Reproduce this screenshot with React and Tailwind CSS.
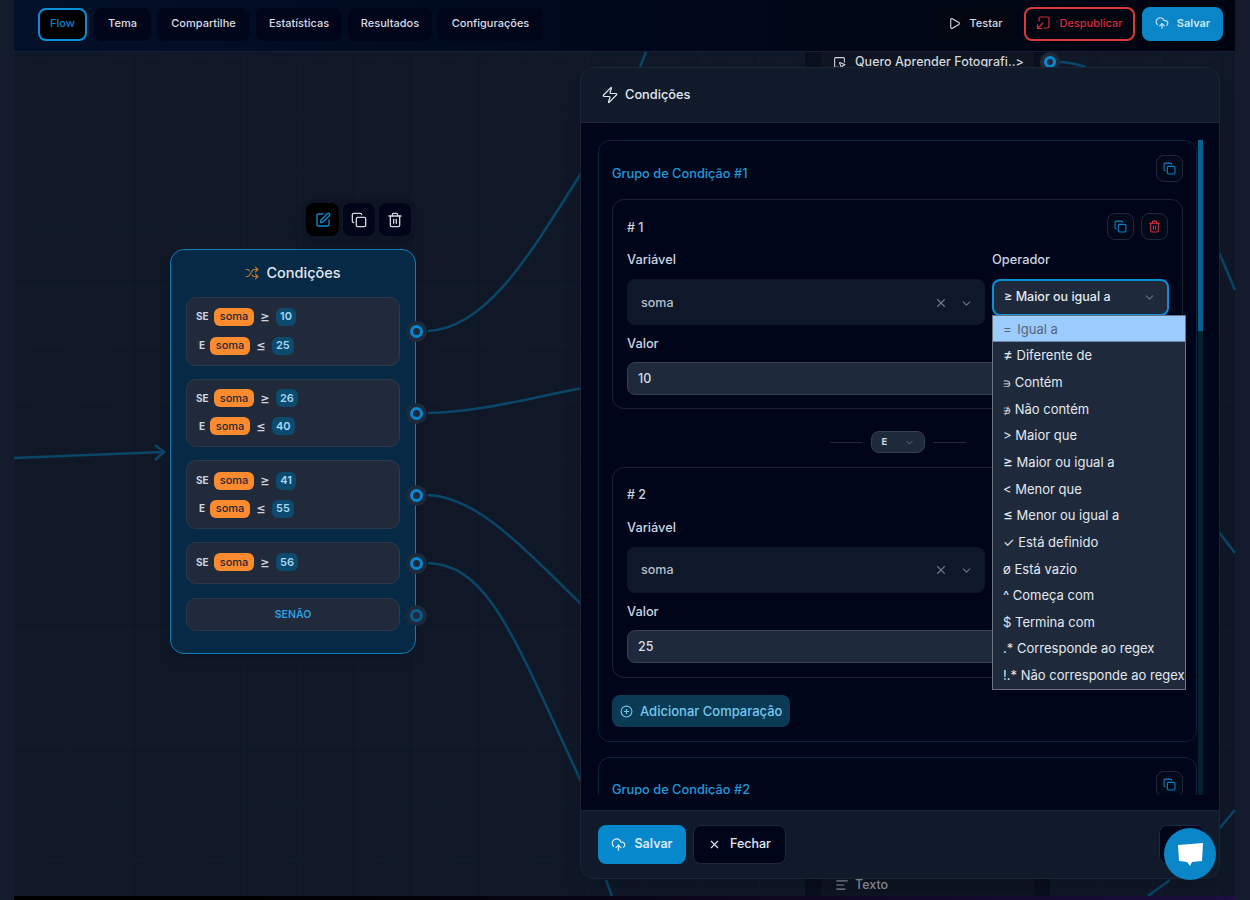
import React from 'react'
import { ChevronDown, CirclePlus, CloudUpload, Copy, AlignLeft, Play, Shuffle, SquareMousePointer, SquarePen, Trash2, X, Zap } from 'lucide-react'

const tabs = [
    { label: 'Tema', w: 'w-[57px]' },
    { label: 'Compartilhe', w: 'w-[93px]' },
    { label: 'Estatísticas', w: 'w-[86px]' },
    { label: 'Resultados', w: 'w-[84px]' },
    { label: 'Configurações', w: 'w-[105px]' },
]

const symBig = 'text-[15px] leading-none'
const symSmall = 'text-[9px] leading-none'

const operators = [
    ['≠', 'Diferente de', symBig],
    ['∋', 'Contém', symSmall],
    ['∌', 'Não contém', symSmall],
    ['>', 'Maior que', ''],
    ['≥', 'Maior ou igual a', symBig],
    ['<', 'Menor que', ''],
    ['≤', 'Menor ou igual a', symBig],
    ['✓', 'Está definido', ''],
    ['ø', 'Está vazio', ''],
    ['^', 'Começa com', ''],
    ['$', 'Termina com', ''],
    ['.*', 'Corresponde ao regex', ''],
    ['!.*', 'Não corresponde ao regex', ''],
]

const nodeGroups = [
    { cls: 'h-[69px] gap-[11px] pb-[1px]', rows: [['SE', '≥', '10'], ['E', '≤', '25']] },
    { cls: 'h-[68px] gap-[10px] pb-[2px]', rows: [['SE', '≥', '26'], ['E', '≤', '40']] },
    { cls: 'h-[69px] gap-[10px]', rows: [['SE', '≥', '41'], ['E', '≤', '55']] },
    { cls: 'h-[42px] pb-[2px]', rows: [['SE', '≥', '56']] },
]

const handles = [331, 413, 495, 563]

const edges = [
    'M428 331 C 490 328, 535 245, 582 172',
    'M428 413 C 480 412, 530 398, 582 388',
    'M428 495 C 480 497, 530 555, 582 605',
    'M428 563 C 490 565, 515 640, 585 790',
    'M14 458 L 163 452',
    'M155 445 L 164 452 L 155 460',
    'M1218 250 L 1235 290',
    'M1218 531 L 1235 553',
    'M1235 810 L 1218 830',
    'M1170 880 L 1148 896',
    'M606 880 L 612 896',
    'M640 67 L 646 52',
    'M1058 62 C 1068 62, 1076 64, 1086 67',
]

const Handle = ({ y, dim }) => (
    <div className="absolute left-[406px] w-[21px] h-[21px] rounded-full bg-[#1e293b] flex items-center justify-center" style={{ top: y - 10 }}>
        <div className={`w-[13px] h-[13px] rounded-full border-[3px] bg-[#1e293b] ${dim ? 'border-[#0b5d8c]' : 'border-[#0788d0]'}`} />
    </div>
)

const NodeRow = ({ row }) => {
    const isSe = row[0] === 'SE'
    return (
        <div className={`flex items-center h-[18px] ${isSe ? 'pl-[9px]' : 'pl-[12px]'}`}>
            <span className={`text-[10px] font-bold text-[#cbd5e1] ${isSe ? 'w-[18px]' : 'w-[11px]'}`}>{row[0]}</span>
            <span className="h-[18px] w-[40px] rounded-[6px] bg-[#fb8b2e] text-[#1f2937] text-[11px] font-medium flex items-center justify-center">soma</span>
            <span className="w-[22px] text-center text-[#cbd5e1] text-[15px] leading-none">{row[1]}</span>
            <span className="h-[18px] px-[4px] min-w-[20px] rounded-[6px] bg-[#0c4a6e] text-[#a5d8f5] text-[11px] font-semibold flex items-center justify-center">{row[2]}</span>
        </div>
    )
}

const ConditionNode = () => (
    <div className="absolute left-[170px] top-[249px] w-[246px] h-[405px] rounded-[14px] border border-[#0f7cb8] bg-[#062a45] px-[15px] shadow-lg">
        <div className="h-[46px] mb-[1px] flex items-center justify-center gap-[7px] text-[14.5px] text-[#e2e8f0] font-medium">
            <Shuffle size={14} className="text-[#c8762f]" />
            Condições
        </div>
        <div className="flex flex-col gap-[13px]">
            {nodeGroups.map((g, i) => (
                <div key={i} className={`${g.cls} rounded-[10px] border border-[#2c394c] bg-[#202a3b] flex flex-col justify-center`}>
                    {g.rows.map((r) => <NodeRow key={r[2]} row={r} />)}
                </div>
            ))}
            <div className="h-[33px] mt-[1px] rounded-[10px] border border-[#2c394c] bg-[#202a3b] flex items-center justify-center text-[10.5px] font-semibold text-[#2f9fe0]">SENÃO</div>
        </div>
    </div>
)

const NodeToolbar = () => (
    <div className="absolute left-[302px] top-[199px] w-[114px] h-[41px] rounded-[10px] bg-[#0d1423] shadow-lg flex items-center pl-[4px] gap-[4px]">
        <button className="w-[33px] h-[33px] rounded-[8px] bg-black text-[#0a8fd6] flex items-center justify-center"><SquarePen size={16} /></button>
        <button className="w-[32px] h-[33px] rounded-[8px] bg-[#01051a] text-[#d1d5db] flex items-center justify-center"><Copy size={16} /></button>
        <button className="w-[32px] h-[33px] rounded-[8px] bg-[#01051a] text-[#d1d5db] flex items-center justify-center"><Trash2 size={16} /></button>
    </div>
)

const IconBtn = ({ red, children }) => (
    <button className={`w-[27px] h-[27px] rounded-[8px] border border-[#1e293b] bg-[#030919] flex items-center justify-center ${red ? 'text-[#dc2f3c]' : 'text-[#0a85c7]'}`}>
        {children}
    </button>
)

const OperatorDropdown = () => (
    <div className="absolute z-20 left-0 top-[36px] w-[194px] h-[375px] border border-[#6b7280] bg-[#1e293b] text-[13px] leading-[26.65px] text-[#e2e8f0]">
        <div className="h-[26.4px] bg-[#9ccbff] text-[#55657c] pl-[10px] border-b border-[#6f89a8]">= <span className="ml-[2px]">Igual a</span></div>
        {operators.map(([sym, text, cls]) => (
            <div key={text} className="h-[26.65px] pl-[10px] whitespace-nowrap overflow-hidden">
                <span className={cls}>{sym}</span> {text}
            </div>
        ))}
    </div>
)

// o segundo card fica coberto pelo dropdown, entao a coluna do operador vai vazia
const Comparison = ({ n, value, first }) => (
    <div className={`w-[571px] rounded-[12px] border border-[#1a2433] px-[14px] pt-[13px] ${first ? 'h-[210px]' : 'h-[211px]'}`}>
        <div className="flex items-center justify-between h-[27px]">
            <span className={`${first ? 'pt-[3px]' : 'pt-[1px]'} text-[12.5px] font-medium text-[#cbd5e1]`}>{`# ${n}`}</span>
            <div className="flex gap-[7px]">
                <IconBtn><Copy size={13} /></IconBtn>
                <IconBtn red><Trash2 size={13} /></IconBtn>
            </div>
        </div>
        <div className="flex gap-[7px] mt-[10px]">
            <div className="w-[358px] shrink-0">
                <div className="h-[18px] leading-[20px] text-[12.8px] text-[#cbd5e1] font-medium">Variável</div>
                <div className={`mt-[11px] h-[46px] rounded-[8px] bg-[#0f172a] flex items-center justify-between ${first ? 'pt-[2px]' : ''} pl-[14px] pr-[12px] text-[12.5px] font-medium text-[#b6c0cc]`}>
                    soma
                    <span className="flex items-center gap-[12px] text-[#6b7685]">
                        <X size={14} />
                        <ChevronDown size={13} />
                    </span>
                </div>
            </div>
            {first && (
                <div>
                    <div className="h-[18px] leading-[20px] text-[12.8px] text-[#cbd5e1] font-medium">Operador</div>
                    <div className="relative mt-[11px] w-[177px]">
                        <div className="h-[37px] rounded-[8px] bg-[#1e293b] border-2 border-[#0a8fd6] flex items-center justify-between pl-[10px] pr-[11px] text-[12.5px] font-medium text-[#e2e8f0]">
                            ≥ Maior ou igual a
                            <ChevronDown size={13} className="text-[#64748b]" />
                        </div>
                        <OperatorDropdown />
                    </div>
                </div>
            )}
        </div>
        <div className="h-[18px] leading-[20px] mt-[9px] text-[12.8px] text-[#cbd5e1] font-medium">Valor</div>
        <div className="mt-[10px] h-[33px] w-[541px] rounded-[8px] bg-[#1e293b] border border-[#334155] flex items-center pt-[2px] pl-[10px] text-[12.5px] font-medium text-[#d5dbe3]">{value}</div>
    </div>
)

const Connector = () => (
    <div className="h-[22px] mt-[22px] mb-[14px] w-[571px] flex items-center justify-center gap-[8px]">
        <div className="w-[33px] h-px bg-[#1e293b]" />
        <div className="w-[54px] h-[22px] rounded-[8px] border border-[#334155] bg-[#1e293b] flex items-center justify-between pl-[10px] pr-[9px] text-[9.5px] font-bold text-[#cbd5e1]">
            E
            <ChevronDown size={11} className="text-[#64748b]" />
        </div>
        <div className="w-[33px] h-px bg-[#1e293b]" />
    </div>
)

const ConditionsModal = () => (
    <div className="absolute z-10 left-[580px] top-[67px] w-[640px] h-[812px] rounded-[14px] border border-[#1b2536] bg-[#111a2b] overflow-hidden flex flex-col shadow-xl">
        <div className="h-[55px] shrink-0 border-b border-[#1b2536] flex items-center gap-[6px] pl-[20px] text-[12.8px] font-medium text-[#e2e8f0]">
            <Zap size={18} strokeWidth={1.6} />
            Condições
        </div>
        <div className="relative flex-1 bg-[#01051a] pt-[17px] pl-[17px]">
            <div className="h-[655px] overflow-hidden">
                <div className="w-[599px] h-[602px] rounded-[12px] border border-[#0b2338] px-[13px] pt-[14px]">
                    <div className="flex items-start justify-between h-[27px] mb-[17px]">
                        <span className="mt-[9px] text-[12.8px] font-medium text-[#1f9ad8]">Grupo de Condição #1</span>
                        <IconBtn><Copy size={13} /></IconBtn>
                    </div>
                    <Comparison n={1} value="10" first />
                    <Connector />
                    <Comparison n={2} value="25" />
                    <button className="mt-[17px] w-[178px] h-[32px] rounded-[8px] bg-[#0b3a55] flex items-center gap-[7px] pt-[1px] pl-[8px] text-[13px] font-medium text-[#74c7ee]">
                        <CirclePlus size={13} />
                        Adicionar Comparação
                    </button>
                </div>
                <div className="mt-[15px] w-[599px] h-[200px] rounded-[12px] border border-[#0b2338] px-[13px] pt-[13px]">
                    <div className="flex items-start justify-between h-[27px]">
                        <span className="mt-[9px] text-[12.8px] font-medium text-[#1f9ad8]">Grupo de Condição #2</span>
                        <IconBtn><Copy size={13} /></IconBtn>
                    </div>
                </div>
            </div>
            <div className="absolute left-[617px] top-[17px] w-[5px] h-[655px] bg-[#04202f]">
                <div className="w-[5px] h-[191px] bg-[#07608f]" />
            </div>
        </div>
        <div className="h-[68px] shrink-0 border-t border-[#1b2536] flex items-center pl-[17px] pr-[14px] gap-[7px]">
            <button className="w-[88px] h-[39px] rounded-[8px] bg-[#0788cc] flex items-center justify-center gap-[8px] text-[12.5px] font-semibold text-[#dbeafe]">
                <CloudUpload size={15} />
                Salvar
            </button>
            <button className="w-[93px] h-[39px] rounded-[8px] border border-[#1e293b] bg-[#01051a] flex items-center justify-center gap-[9px] text-[12.5px] font-medium text-[#e2e8f0]">
                <X size={13} />
                Fechar
            </button>
            <button className="ml-auto w-[46px] h-[39px] rounded-[8px] border border-[#1e293b] bg-[#01051a]" />
        </div>
    </div>
)

const TopBar = () => (
    <div className="relative z-10 h-[52px] shrink-0 border-b border-[#14203a] bg-gradient-to-r from-[#021029] to-[#00040f] flex items-center justify-between pb-[3px] pl-[24px] pr-[12px]">
        <div className="flex gap-[6px] text-[11px] font-medium text-[#d8dde6]">
            <button className="w-[49px] mr-[1px] h-[33px] pb-[2px] rounded-[8px] border-2 border-[#0a8fd6] bg-black text-[#0a85c7]">Flow</button>
            {tabs.map((t) => (
                <button key={t.label} className={`${t.w} h-[33px] pb-[2px] rounded-[8px] bg-[#01051a]`}>{t.label}</button>
            ))}
        </div>
        <div className="flex items-center gap-[7px] text-[11px] font-medium">
            <button className="w-[81px] h-[33px] pb-[2px] rounded-[8px] bg-[#01050f] flex items-center justify-center gap-[8px] text-[#d8dde6]">
                <Play size={13} />
                Testar
            </button>
            <button className="ml-[1px] w-[111px] h-[34px] pb-[2px] rounded-[8px] border-2 border-[#dc3a3a] bg-[#01050f] flex items-center justify-center gap-[9px] text-[#d62b36]">
                <svg width="14" height="14" viewBox="0 0 14 14" fill="none" stroke="currentColor" strokeWidth="1.2" strokeLinecap="round" strokeLinejoin="round">
                    <path d="M3 5V2.500A1.500 1.500 0 0 1 4.500 1h7A1.500 1.500 0 0 1 13 2.500v8a1.500 1.500 0 0 1-1.500 1.500H8" />
                    <path d="M7 7L1.500 12.500M1.500 8.500v4h4" />
                </svg>
                Despublicar
            </button>
            <button className="w-[81px] h-[34px] pb-[2px] rounded-[8px] bg-[#0a85c7] flex items-center justify-center gap-[8px] text-[#cfe6f5] font-semibold">
                <CloudUpload size={14} />
                Salvar
            </button>
        </div>
    </div>
)

export default function App() {
    return (
        <div className="relative w-[1250px] h-[900px] overflow-hidden bg-[#141b2c] font-['Inter',sans-serif] flex">
            <div className="w-[14px] shrink-0" />
            <div className="w-[1221px] flex flex-col bg-[#101828] bg-[linear-gradient(#16213260_1px,transparent_1px),linear-gradient(90deg,#16213260_1px,transparent_1px)] bg-[size:57.3px_57.3px]">
                <TopBar />
                <div className="flex-1" />
                <div className="relative z-10 h-[4px] shrink-0 bg-gradient-to-r from-black via-[#0a0618] to-[#1c0f40]" />
            </div>

            {/* nos que ficam atras do modal */}
            <div className="absolute left-[805px] top-[52px] w-[245px] h-[844px] bg-[#0a0f1e] px-[16px]">
                <div className="h-[844px] bg-[#0f1523] flex flex-col justify-between">
                    <div className="pl-[12px] pt-[1px] flex items-center gap-[9px] text-[12.5px] leading-[18px] font-medium text-[#d1d5db] whitespace-nowrap">
                        <SquareMousePointer size={13} />
                        Quero Aprender Fotografi..&gt;
                    </div>
                    <div className="pl-[14px] pb-[2px] flex items-center gap-[6px] text-[12.5px] leading-[18px] font-medium text-[#8b93a1]">
                        <AlignLeft size={14} />
                        Texto
                    </div>
                </div>
            </div>
            <svg className="absolute inset-0 pointer-events-none" width="1250" height="900" fill="none" stroke="#0a4668" strokeWidth="2.5">
                {edges.map((d) => <path key={d} d={d} />)}
            </svg>
            <div className="absolute left-[1040px] top-[52px] w-[20px] h-[20px] rounded-full bg-[#1e293b] flex items-center justify-center">
                <div className="w-[12px] h-[12px] rounded-full border-[3px] border-[#0788d0]" />
            </div>

            <NodeToolbar />
            <ConditionNode />
            {handles.map((y) => <Handle key={y} y={y} />)}
            <Handle y={615} dim />

            <ConditionsModal />

            <button className="absolute z-20 left-[1164px] top-[828px] w-[52px] h-[52px] rounded-full bg-[#0a85c7] flex items-center justify-center">
                <svg width="27" height="23" viewBox="0 0 27 23" fill="#fff">
                    <path d="M1 2 L26 0 L25 18 L15 19 L13 23 L10 19 L2 18 Z" />
                </svg>
            </button>
        </div>
    )
}
